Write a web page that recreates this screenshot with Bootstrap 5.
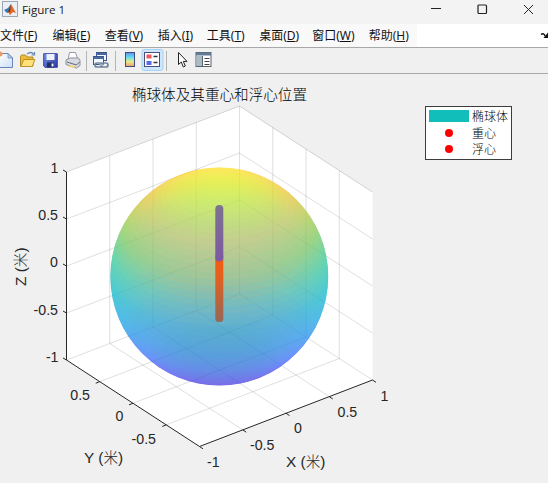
<!DOCTYPE html>
<html lang="zh-CN">
<head>
<meta charset="utf-8">
<title>Figure 1</title>
<link rel="stylesheet" href="https://cdn.jsdelivr.net/npm/bootstrap@5.3.0/dist/css/bootstrap.min.css">
<style>
body{width:548px;height:483px;overflow:hidden;background:#f0f0f0;color:#1a1a1a;font:12px/1 "Open Sans","Noto Sans CJK SC",sans-serif}
.titlebar{height:24px;background:#f3f3f3;padding:0 14px 6px 2px}
.titlebar .caption{font-size:11.6px;margin-left:4px;padding-top:1px}
.winbtns{gap:34px}
.menubar{height:24px;background:#fff;border-bottom:1px solid #a8a8a8}
.menus{width:417px;background:#f9f9f9}
.menus a{color:#111;text-decoration:none;white-space:nowrap;flex:none;font-family:"Noto Sans","Noto Sans CJK SC",sans-serif;padding-top:1px}
.w49{width:49px}.w52{width:52.4px}.w53{width:53px}.w57{width:56.5px}
.toolbar-strip{height:26px;border-bottom:1px solid #a9a9a9;background:#f0f0f0}
.figure-area{height:409px}
.lab{font:14.2px "Liberation Sans","Noto Sans CJK SC",sans-serif;fill:#262626}
.axis-name{font:15.4px "Liberation Sans","Noto Sans CJK SC",sans-serif;fill:#262626}
.cjk{font-size:14.6px;font-weight:300;font-family:"Noto Sans CJK SC Light","Noto Sans CJK SC",sans-serif}
.legend-box{left:425px;top:32px;width:87px;height:54px;background:#fff;border:1px solid #3c3c3c;padding:1px 0 0 3px;font:300 12px/16.6px "Noto Sans CJK SC Light","Noto Sans CJK SC",sans-serif;color:#000}
.legend-box .entry{margin-left:3px;white-space:nowrap}
.key{width:40px;height:12px}.key-fill{background:#12beb9}
.dot{width:8px;height:8px;background:#f00}
svg{display:block}
</style>
<script src="https://cdn.jsdelivr.net/npm/bootstrap@5.3.0/dist/js/bootstrap.bundle.min.js"></script>
</head>
<body>
<header class="titlebar d-flex align-items-center">
 <svg width="16" height="16" viewBox="0 0 16 16"><rect x=".5" y=".5" width="15" height="15" fill="#e9eff4" stroke="#98a8b4"/><path d="M2 9l4-2 3-4-1 8-3 1z" fill="#327ab5"/><path d="M9 3l5 9-3-1-3 3-2-3z" fill="#df6a25"/><path d="M9 3l-1 8-2 0 2-5z" fill="#7b2722"/></svg>
 <span class="caption">Figure 1</span>
 <div class="winbtns d-flex align-items-center ms-auto">
  <svg width="12" height="12"><path d="M1 5.500h10" stroke="#222" fill="none"/></svg>
  <svg width="12" height="12"><rect x="2" y="2" width="8.500" height="8.500" rx="1" stroke="#222" fill="none" stroke-width="1.200"/></svg>
  <svg width="12" height="12"><path d="M2 2l9 9M11 2l-9 9" stroke="#222" fill="none"/></svg>
 </div>
</header>
<nav class="menubar d-flex">
 <div class="menus d-flex align-items-center">
  <a class="w52">文件(<u>F</u>)</a><a class="w52">编辑(<u>E</u>)</a><a class="w53">查看(<u>V</u>)</a><a class="w49">插入(<u>I</u>)</a><a class="w52">工具(<u>T</u>)</a><a class="w53">桌面(<u>D</u>)</a><a class="w57">窗口(<u>W</u>)</a><a>帮助(<u>H</u>)</a>
 </div>
 <svg class="ms-auto" width="8" height="23"><path d="M1 10.500q3-2 4 1.500" stroke="#111" fill="none" stroke-width="1.500"/><path d="M8 8.500v5.500H3.500z" fill="#111"/></svg>
</nav>
<div class="toolbar-strip">
<svg width="230" height="25" viewBox="0 48 230 25">
 <defs>
  <linearGradient id="paper" x2="1" y2="1"><stop stop-color="#fff"/><stop offset="1" stop-color="#cddff5"/></linearGradient>
  <linearGradient id="cb" x2="0" y2="1"><stop stop-color="#5c8ff0"/><stop offset=".35" stop-color="#68ddec"/><stop offset=".65" stop-color="#e4eb85"/><stop offset="1" stop-color="#f49a75"/></linearGradient>
  <linearGradient id="disk" x2="1" y2="1"><stop stop-color="#7995e9"/><stop offset="1" stop-color="#2835a0"/></linearGradient>
 </defs>
 <path d="M-2 53.500h10l4.500 4.500v9.500H-2z" fill="url(#paper)" stroke="#6685b8"/><path d="M8 53.500v4.500h4.500z" fill="#b9d0ed" stroke="#6685b8" stroke-width=".7"/><circle cx="0" cy="54" r="2.500" fill="#f19a61"/>
 <path d="M20.500 66V56.500l1-1.500h4l1.500 2h6V66z" fill="#eebb37" stroke="#b58a25"/><path d="M20.800 66.500l3-7h11l-2.500 7z" fill="#ffe37a" stroke="#bd9127"/><path d="M27 54q4-3 6.500 0m-2 1h3v-3" fill="none" stroke="#6588b0" stroke-width="1.200"/>
 <path d="M43.700 53.700h13.600v13.600H45l-1.300-1.300z" fill="url(#disk)" stroke="#3542a0"/><path d="M46.500 54h8v6h-8z" fill="#eef1fb"/><path d="M47 62.500h7v5h-7z" fill="#202f66"/><path d="M51.500 63.500h2v3h-2z" fill="#f3f3f3"/>
 <path d="M68 60l1.500-7.500h6L78 60z" fill="#fff" stroke="#959baa"/><path d="M66 60l4-2h8.500l1.500 2.500v5L76.500 68 66 64.500z" fill="#d7dbe1" stroke="#8a909c"/><path d="M67 62l9.500 3 3-3" stroke="#60697a" fill="none"/><path d="M70 65l6 1.500-2 1.500-6-1.500z" fill="#f3d576"/>
 <path d="M86.500 51v20M115.500 51v20M166.500 51v20" stroke="#b4b4b4"/>
 <rect x="96.500" y="52.500" width="10" height="8" fill="#f5f8ff" stroke="#3d5687"/><path d="M96 53h11v2H96z" fill="#4668a5"/><rect x="93.500" y="56.500" width="10" height="8" fill="#f2f6ff" stroke="#3d5687"/><path d="M93 57h11v2H93z" fill="#4668a5"/><g fill="none" stroke="#71859f" stroke-width="1.700"><rect x="95" y="63" width="7" height="4" rx="2"/><rect x="101" y="63" width="7" height="4" rx="2"/></g><path d="M99 65h5" stroke="#cad4e2"/>
 <rect x="125.500" y="52.500" width="9" height="14" fill="url(#cb)" stroke="#414a83"/>
 <rect x="142" y="49.500" width="21" height="21" rx="2" fill="#cde6fb" stroke="#a5d3f7"/>
 <rect x="144.500" y="52.500" width="15" height="14" fill="#fff" stroke="#465079"/><path d="M146.500 54.500h5v4h-5z" fill="#f05760"/><path d="M146.500 61h5v4h-5z" fill="#5868ef"/><path d="M153.500 56.500h4M153.500 62.500h4" stroke="#333" stroke-width="1.300"/>
 <path d="M178.500 52.500v12l2.800-2.500 2 5 2-1-2-4.600h3.700z" fill="#fff" stroke="#222"/>
 <rect x="196" y="52.500" width="15" height="14" fill="#fff" stroke="#59636e"/><path d="M196 52.500h15v3h-15z" fill="#647b96"/><path d="M197 56h5v10h-5z" fill="#a9bdc7"/><path d="M202.500 56v10" stroke="#59636e"/><path d="M204.500 58.500h5M204.500 61.500h5M204.500 64.500h5" stroke="#444"/>
</svg>
</div>
<main class="figure-area position-relative">
<svg width="548" height="409" viewBox="0 74 548 409">
 <path d="M66.500 172L239.500 106.500 372.500 192.500V380L199.500 446.500 66.500 360z" fill="#fff"/>
 <g id="grid" stroke="#262626" stroke-opacity=".15" fill="none"></g>
 <g id="farSide" clip-path="url(#ballclip)" opacity=".5"></g>
 <g id="nearSide" clip-path="url(#ballclip)" opacity=".5"></g>
 <defs>
  <clipPath id="ballclip"><circle cx="219.300" cy="276.500" r="109"/></clipPath>
  <linearGradient id="rodA" x2="0" y2="1"><stop stop-color="#7c748f"/><stop offset=".5" stop-color="#7d659a"/><stop offset="1" stop-color="#7c58a4"/></linearGradient>
  <linearGradient id="rodB" x2="0" y2="1"><stop stop-color="#f95b0c"/><stop offset=".35" stop-color="#e4601f"/><stop offset="1" stop-color="#956757"/></linearGradient>
 </defs>
 <rect x="215.300" y="253" width="8" height="69" rx="3.500" fill="url(#rodB)"/>
 <rect x="215.300" y="205" width="8" height="56.500" rx="4" fill="url(#rodA)"/>
 <g id="axes" stroke="#262626" fill="none"><path d="M66.500 172V360L199.500 446.500 372.500 380"/></g>
 <text class="cjk" x="219.500" y="100" text-anchor="middle" fill="#000">椭球体及其重心和浮心位置</text>
 <g class="lab" text-anchor="end"><text x="58.500" y="172.500">1</text><text x="58" y="219.500">0.5</text><text x="58" y="267">0</text><text x="58" y="315">-0.5</text><text x="58.500" y="362">-1</text>
 <text x="90" y="399.500">0.5</text><text x="123.500" y="421">0</text><text x="156" y="443.500">-0.5</text></g>
 <g class="lab"><text x="207" y="466.500">-1</text><text x="250" y="450">-0.5</text><text x="294" y="433">0</text><text x="337.500" y="416.500">0.5</text><text x="380.500" y="400.500">1</text></g>
 <text class="axis-name" x="84" y="462.500">Y (<tspan class="cjk">米</tspan>)</text>
 <text class="axis-name" x="286" y="467">X (<tspan class="cjk">米</tspan>)</text>
 <text class="axis-name" transform="translate(26 286) rotate(-90)">Z (<tspan class="cjk">米</tspan>)</text>
</svg>
<div class="legend-box position-absolute">
 <div class="d-flex align-items-center"><span class="key key-fill"></span><span class="entry">椭球体</span></div>
 <div class="d-flex align-items-center"><span class="key d-flex align-items-center justify-content-center"><i class="dot rounded-circle"></i></span><span class="entry">重心</span></div>
 <div class="d-flex align-items-center"><span class="key d-flex align-items-center justify-content-center"><i class="dot rounded-circle"></i></span><span class="entry">浮心</span></div>
</div>
</main>
<script>
const ns='http://www.w3.org/2000/svg';
function add(id,tag,attrs){const e=document.createElementNS(ns,tag);for(const k in attrs)e.setAttribute(k,attrs[k]);document.getElementById(id).appendChild(e);}
// Corners of the axes box, with a quarter-step grid on the walls and the floor
const L=[66.5,360],B=[239.5,294],R=[372.5,380],F=[199.5,446.5];
const mix=(a,b,t)=>[a[0]+(b[0]-a[0])*t,a[1]+(b[1]-a[1])*t];
const up=(p,h)=>[p[0],p[1]-h];
function seg(id,...pts){add(id,'path',{d:'M'+pts.map(p=>p.join(' ')).join('L')});}
for(let i=0;i<=4;i++){
  const t=i/4,h=188*t;
  seg('grid',up(L,h),up(B,h),up(R,h));
  if(i<4){const a=mix(L,B,t),b=mix(B,R,t);if(i)seg('grid',a,up(a,188));seg('grid',b,up(b,188));}
  if(i&&i<4){seg('grid',mix(L,B,t),mix(F,R,t));seg('grid',mix(B,R,t),mix(L,F,t));}
  const z=up(L,h);seg('axes',z,[z[0]-3.5,z[1]-2]);
  const x=mix(F,R,t);seg('axes',x,[x[0]+3.5,x[1]+2.3]);
  if(i&&i<4){const y=mix(L,F,t);seg('axes',y,[y[0]-4,y[1]+1.6]);}
}
// Parula colour scale over height
const map=[[64,38,170],[78,78,246],[46,135,247],[18,173,220],[18,190,185],[72,203,134],[171,199,57],[254,195,56],[249,251,21]];
function colour(z){const v=(z+1)*4,i=Math.min(7,Math.floor(v)),f=v-i;return 'rgb('+map[i].map((c,k)=>Math.round(c+(map[i+1][k]-c)*f))+')';}
// Latitude rings stacked upward give the near surface, stacked downward the far one
const N=50,rad=109,co=.864,si=.503;
function ring(id,z,c){const r=rad*Math.sqrt(Math.max(0,1-z*z));add(id,'ellipse',{cx:219.3,cy:276.5-z*rad*co,rx:r,ry:r*si,fill:c,stroke:c,'stroke-width':.5});}
for(const [id,s] of [['nearSide',1],['farSide',-1]]){
  // A full disc closes the thin gaps between rings at the silhouette
  add(id,'circle',{cx:219.3,cy:276.5,r:109,fill:colour(-s*co)});
  for(let i=0;i<N;i++){
    const a=-Math.PI/2+Math.PI*i/N;
    ring(id,s*Math.sin(a),colour(s*Math.sin(a+Math.PI/N/2)));
  }
}
</script>
</body>
</html>
